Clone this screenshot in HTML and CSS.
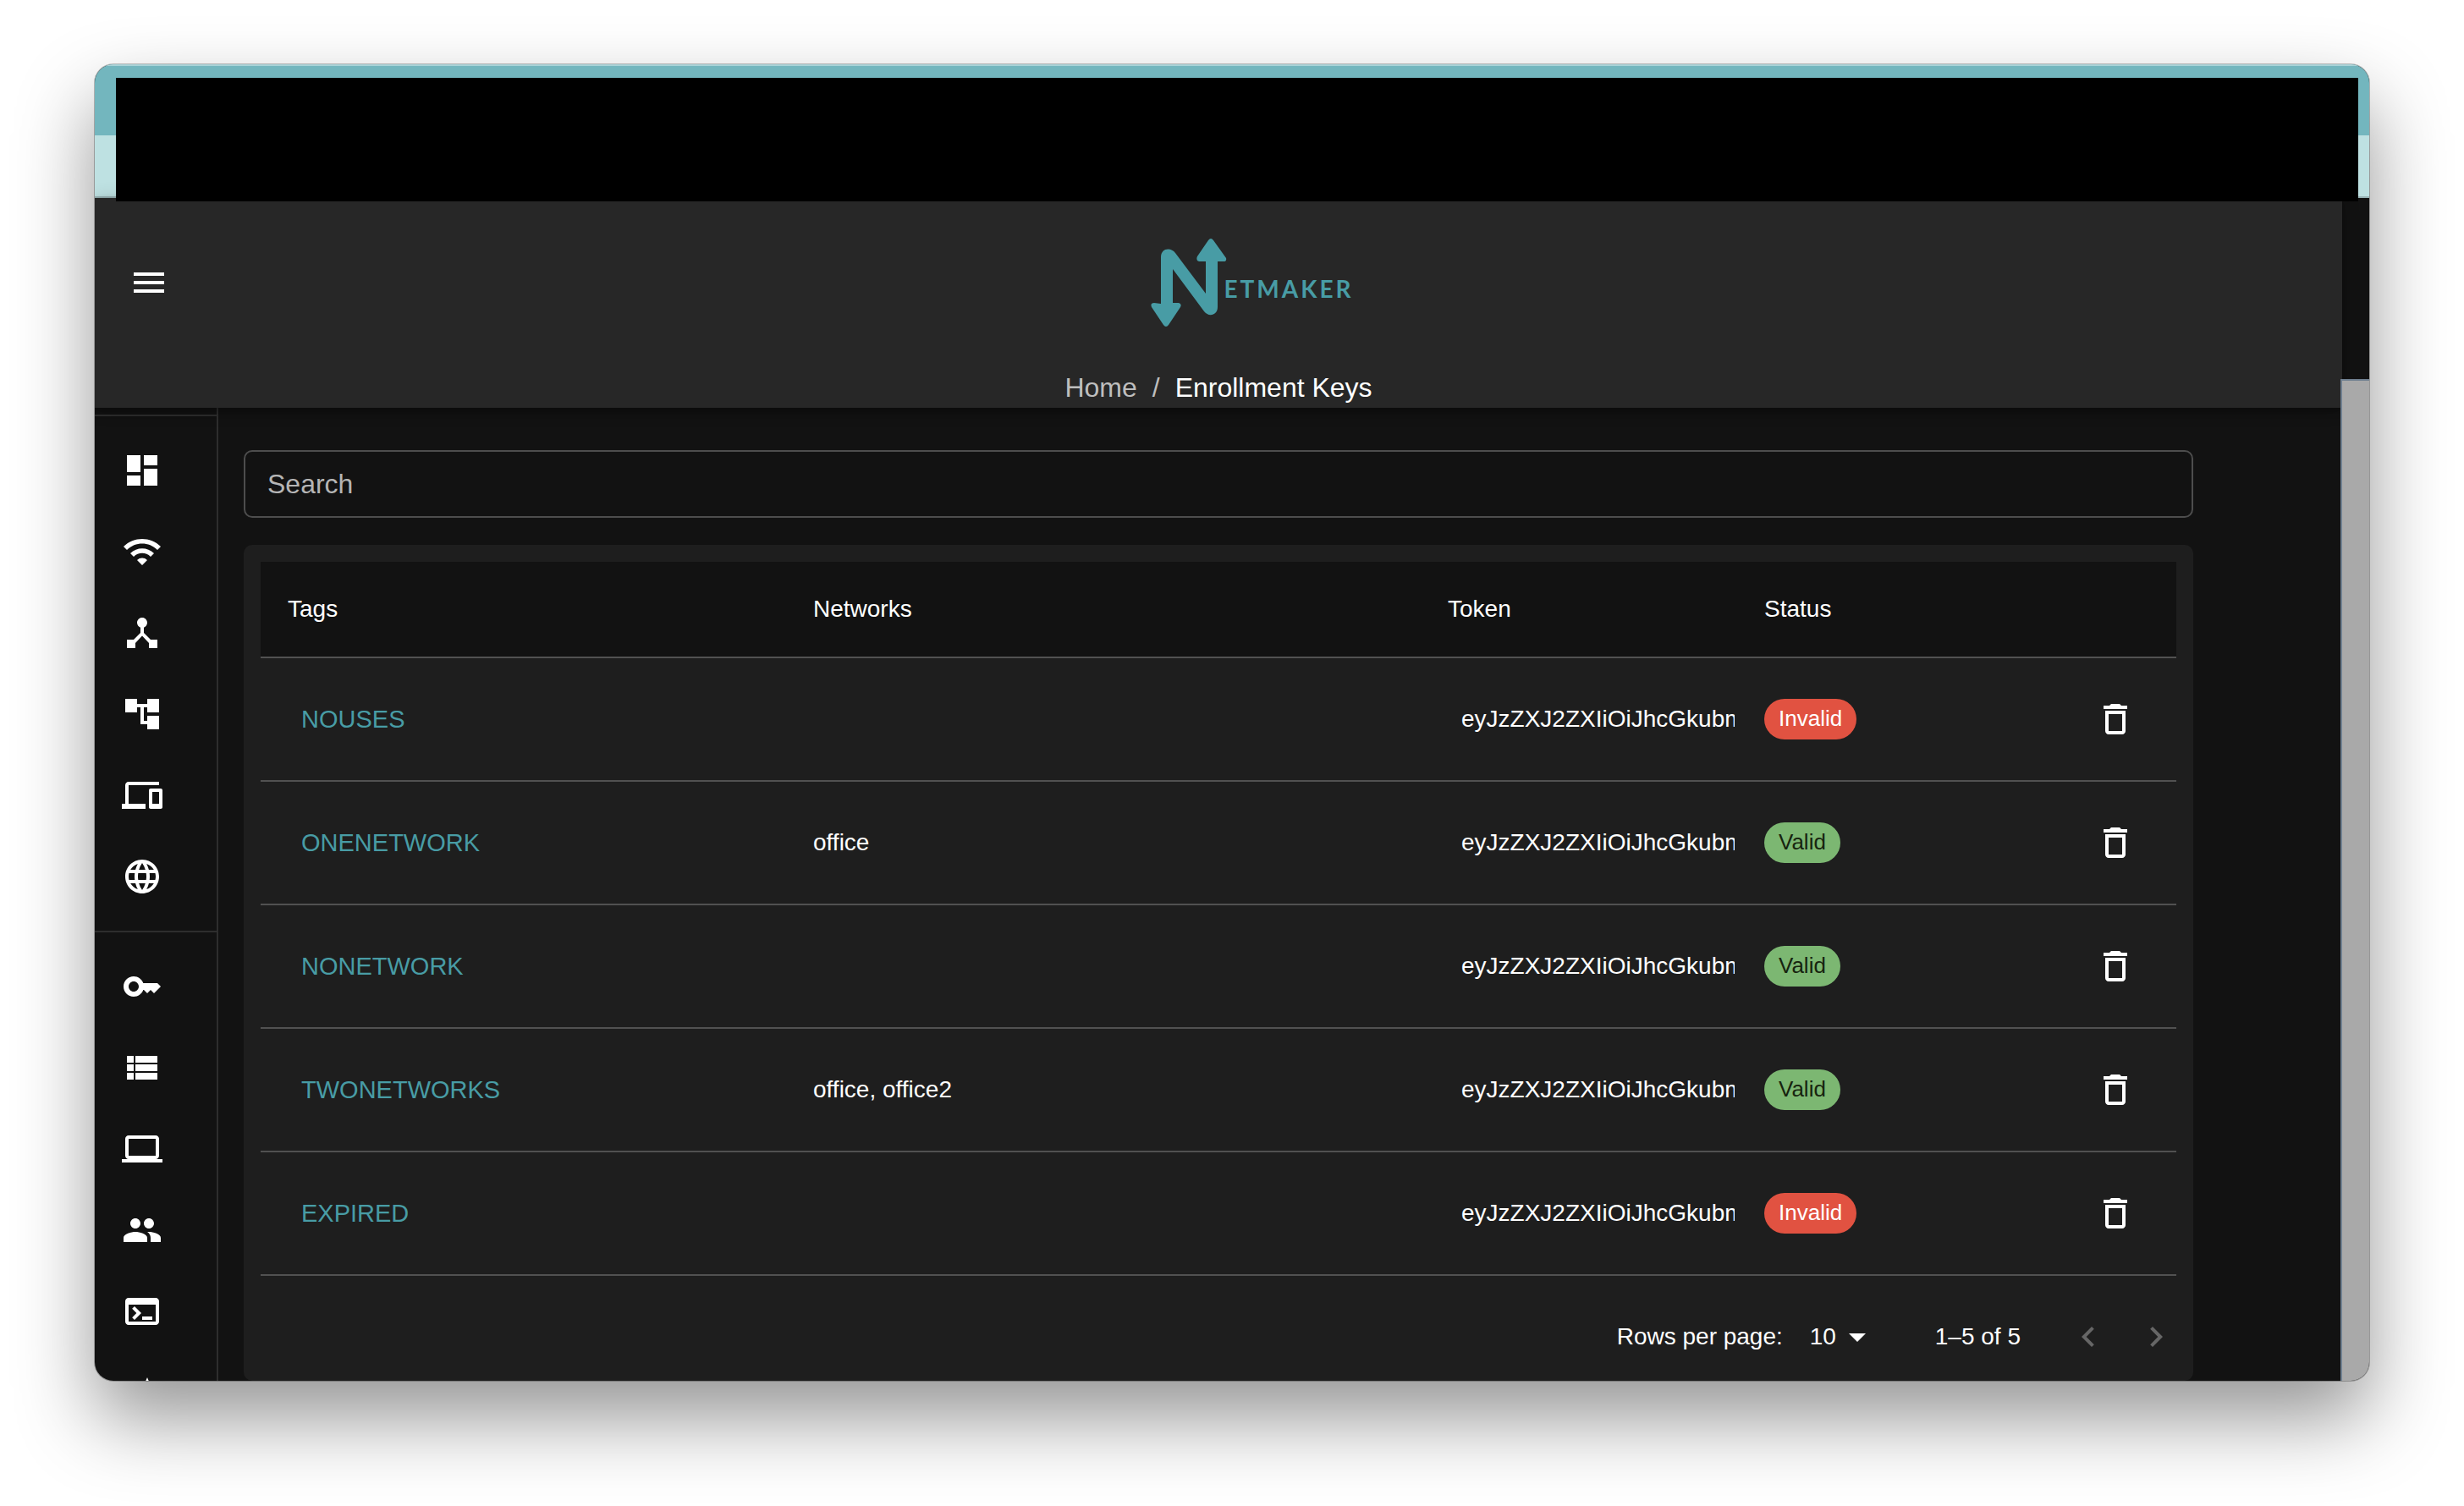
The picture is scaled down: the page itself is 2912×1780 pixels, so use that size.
FILE: index.html
```html
<!DOCTYPE html>
<html lang="en">
<head>
<meta charset="utf-8">
<title>Netmaker – Enrollment Keys</title>
<link rel="stylesheet" href="styles.css">
</head>
<body>
<svg class="defs" aria-hidden="true">
  <symbol id="trash" viewBox="0 0 24 24"><path d="M6 19c0 1.100.9 2 2 2h8c1.100 0 2-.9 2-2V7H6v12zM8 9h8v10H8V9zm7.500-5-1-1h-5l-1 1H5v2h14V4z"/></symbol>
</svg>
<div class="window">
  <div class="chrome"><div class="tabs"></div><div class="toolbar"></div></div>
  <div class="redaction"></div>
  <div class="viewport">
    <div class="app">
      <header class="appbar">
        <div class="appbar-row">
          <button class="icon-button" aria-label="Open menu"><svg class="icon" viewBox="0 0 24 24"><path d="M3 18h18v-2H3v2zm0-5h18v-2H3v2zm0-7v2h18V6H3z"/></svg></button>
          <a class="logo" href="#" aria-label="Netmaker">
            <svg class="logo-mark" viewBox="0 0 90 106"><path d="M12 78V23C12 12 24 11 29 18L65 66V28H57Q53 27 55 22L68 3Q71-1 74 3L89 24Q90 28 86 28H79V82C79 92 68 94 63 87L26 37V77H33Q37 78 35 82L21 103Q18 107 15 103L1 82Q-1 77 4 77Z"/></svg>
            <span class="logo-word">ETMAKER</span>
          </a>
        </div>
        <nav class="crumbs" aria-label="Breadcrumb"><a href="#">Home</a><span class="sep">/</span><span class="current">Enrollment Keys</span></nav>
      </header>
      <div class="body">
        <nav class="sidebar" aria-label="Main">
          <div class="group">
            <a href="#" aria-label="Dashboard"><svg class="icon" viewBox="0 0 24 24"><path d="M3 13h8V3H3v10zm0 8h8v-6H3v6zm10 0h8V11h-8v10zm0-18v6h8V3h-8z"/></svg></a>
            <a href="#" aria-label="Networks"><svg class="icon" viewBox="0 0 24 24"><path d="m1 9 2 2c4.970-4.970 13.030-4.970 18 0l2-2C16.930 2.930 7.080 2.930 1 9zm8 8 3 3 3-3c-1.650-1.660-4.340-1.660-6 0zm-4-4 2 2c2.760-2.760 7.240-2.760 10 0l2-2C15.140 9.140 8.870 9.140 5 13z"/></svg></a>
            <a href="#" aria-label="Nodes"><svg class="icon" viewBox="0 0 24 24"><path d="M17 16l-4-4V8.820C14.160 8.400 15 7.300 15 6c0-1.660-1.340-3-3-3S9 4.340 9 6c0 1.300.84 2.400 2 2.820V12l-4 4H3v5h5v-3.050l4-4.200 4 4.200V21h5v-5h-4z"/></svg></a>
            <a href="#" aria-label="Relays"><svg class="icon" viewBox="0 0 24 24"><path d="M22 11V3h-7v3H9V3H2v8h7V8h2v10h4v3h7v-8h-7v3h-2V8h2v3z"/></svg></a>
            <a href="#" aria-label="Clients"><svg class="icon" viewBox="0 0 24 24"><path d="M4 6h18V4H4c-1.100 0-2 .9-2 2v11H0v3h14v-3H4V6zm19 2h-6c-.55 0-1 .45-1 1v10c0 .55.45 1 1 1h6c.55 0 1-.45 1-1V9c0-.55-.45-1-1-1zm-1 9h-4v-7h4v7z"/></svg></a>
            <a href="#" aria-label="DNS"><svg class="icon" viewBox="0 0 24 24"><path d="M11.990 2C6.470 2 2 6.480 2 12s4.470 10 9.990 10C17.520 22 22 17.520 22 12S17.520 2 11.990 2zm6.930 6h-2.950c-.32-1.250-.78-2.450-1.380-3.560 1.840.63 3.370 1.910 4.330 3.560zM12 4.040c.83 1.200 1.480 2.530 1.910 3.960h-3.820c.43-1.430 1.080-2.760 1.910-3.960zM4.260 14C4.100 13.360 4 12.690 4 12s.1-1.360.26-2h3.380c-.08.66-.14 1.320-.14 2s.06 1.340.14 2H4.260zm.82 2h2.950c.32 1.250.78 2.450 1.380 3.560-1.840-.63-3.370-1.900-4.330-3.560zm2.950-8H5.080c.96-1.660 2.490-2.930 4.330-3.560C8.810 5.550 8.350 6.750 8.030 8zM12 19.960c-.83-1.200-1.480-2.530-1.910-3.960h3.820c-.43 1.430-1.080 2.760-1.910 3.960zM14.340 14H9.660c-.09-.66-.16-1.320-.16-2s.07-1.350.16-2h4.680c.09.65.16 1.320.16 2s-.07 1.340-.16 2zm.25 5.560c.6-1.110 1.060-2.310 1.380-3.560h2.950c-.96 1.650-2.490 2.930-4.330 3.560zM16.360 14c.08-.66.14-1.320.14-2s-.06-1.340-.14-2h3.380c.16.64.26 1.310.26 2s-.1 1.360-.26 2h-3.380z"/></svg></a>
          </div>
          <div class="group">
            <a href="#" aria-label="Enrollment keys"><svg class="icon" viewBox="0 0 24 24"><path d="M21 10h-8.350C11.830 7.670 9.610 6 7 6c-3.310 0-6 2.690-6 6s2.690 6 6 6c2.610 0 4.830-1.670 5.650-4H13l2 2 2-2 2 2 4-4.040L21 10zM7 15c-1.650 0-3-1.350-3-3s1.350-3 3-3 3 1.350 3 3-1.350 3-3 3z"/></svg></a>
            <a href="#" aria-label="ACLs"><svg class="icon" viewBox="0 0 24 24"><path d="M3 14h4v-4H3v4zm0 5h4v-4H3v4zM3 9h4V5H3v4zm5 5h13v-4H8v4zm0 5h13v-4H8v4zM8 5v4h13V5H8z"/></svg></a>
            <a href="#" aria-label="Hosts"><svg class="icon" viewBox="0 0 24 24"><path d="M20 18c1.100 0 1.990-.9 1.990-2L22 6c0-1.100-.9-2-2-2H4c-1.100 0-2 .9-2 2v10c0 1.100.9 2 2 2H0v2h24v-2h-4zM4 6h16v10H4V6z"/></svg></a>
            <a href="#" aria-label="Users"><svg class="icon" viewBox="0 0 24 24"><path d="M16 11c1.660 0 2.990-1.340 2.990-3S17.660 5 16 5c-1.660 0-3 1.340-3 3s1.340 3 3 3zm-8 0c1.660 0 2.990-1.340 2.990-3S9.660 5 8 5C6.340 5 5 6.340 5 8s1.340 3 3 3zm0 2c-2.330 0-7 1.170-7 3.500V19h14v-2.500c0-2.330-4.670-3.500-7-3.500zm8 0c-.29 0-.62.02-.97.05 1.160.84 1.970 1.970 1.970 3.450V19h6v-2.500c0-2.330-4.670-3.500-7-3.500z"/></svg></a>
            <a href="#" aria-label="Logs"><svg class="icon" viewBox="0 0 24 24"><path d="M20 4H4c-1.110 0-2 .9-2 2v12c0 1.100.89 2 2 2h16c1.100 0 2-.9 2-2V6c0-1.100-.89-2-2-2zm0 14H4V8h16v10zm-2-1h-6v-2h6v2zM7.500 17l-1.410-1.410L8.670 13l-2.590-2.590L7.500 9l4 4-4 4z"/></svg></a>
            <a href="#" aria-label="Theme"><svg class="icon" viewBox="0 0 24 24"><path d="M15 3 16.500 6.500 20 8l-3.500 1.500L15 13 13.500 9.500 10 8l3.500-1.500z"/></svg></a>
          </div>
        </nav>
        <main class="main">
          <input class="search" type="text" placeholder="Search" aria-label="Search">
          <section class="card">
            <table class="keys">
              <colgroup><col class="c-tags"><col class="c-networks"><col class="c-token"><col class="c-status"><col></colgroup>
              <thead><tr><th>Tags</th><th>Networks</th><th>Token</th><th>Status</th><th></th></tr></thead>
              <tbody>
                <tr><td><button class="tag">NOUSES</button></td><td></td><td class="token"><div>eyJzZXJ2ZXIiOiJhcGkubmV0</div></td><td><span class="pill invalid">Invalid</span></td><td class="action"><button class="icon-button" aria-label="Delete NOUSES"><svg class="icon"><use href="#trash"/></svg></button></td></tr>
                <tr><td><button class="tag">ONENETWORK</button></td><td>office</td><td class="token"><div>eyJzZXJ2ZXIiOiJhcGkubmV0</div></td><td><span class="pill valid">Valid</span></td><td class="action"><button class="icon-button" aria-label="Delete ONENETWORK"><svg class="icon"><use href="#trash"/></svg></button></td></tr>
                <tr><td><button class="tag">NONETWORK</button></td><td></td><td class="token"><div>eyJzZXJ2ZXIiOiJhcGkubmV0</div></td><td><span class="pill valid">Valid</span></td><td class="action"><button class="icon-button" aria-label="Delete NONETWORK"><svg class="icon"><use href="#trash"/></svg></button></td></tr>
                <tr><td><button class="tag">TWONETWORKS</button></td><td>office, office2</td><td class="token"><div>eyJzZXJ2ZXIiOiJhcGkubmV0</div></td><td><span class="pill valid">Valid</span></td><td class="action"><button class="icon-button" aria-label="Delete TWONETWORKS"><svg class="icon"><use href="#trash"/></svg></button></td></tr>
                <tr><td><button class="tag">EXPIRED</button></td><td></td><td class="token"><div>eyJzZXJ2ZXIiOiJhcGkubmV0</div></td><td><span class="pill invalid">Invalid</span></td><td class="action"><button class="icon-button" aria-label="Delete EXPIRED"><svg class="icon"><use href="#trash"/></svg></button></td></tr>
              </tbody>
            </table>
            <footer class="pagination">
              <label for="rows">Rows per page:</label>
              <span class="select"><select id="rows"><option>10</option><option>25</option></select><svg class="icon" viewBox="0 0 24 24"><path d="m7 10 5 5 5-5z"/></svg></span>
              <span class="range">1–5 of 5</span>
              <button class="page" aria-label="Previous page" disabled><svg class="icon" viewBox="0 0 24 24"><path d="M15.410 16.590 10.830 12l4.580-4.590L14 6l-6 6 6 6z"/></svg></button>
              <button class="page" aria-label="Next page" disabled><svg class="icon" viewBox="0 0 24 24"><path d="M8.590 16.590 13.170 12 8.590 7.410 10 6l6 6-6 6z"/></svg></button>
            </footer>
          </section>
        </main>
      </div>
    </div>
    <div class="scrollbar"><div class="thumb"></div></div>
  </div>
</div>
</body>
</html>
```
FILE: styles.css
```css
* { box-sizing: border-box; }
body {
  margin: 0;
  padding: 76px 112px 148px;
  height: 100vh;
  background: #fff;
  color: #fff;
  font: 28px/40px "Liberation Sans", Arial, sans-serif;
  overflow: hidden;
}
button, input, select { font: inherit; color: inherit; background: none; border: 0; margin: 0; padding: 0; }
a { color: inherit; text-decoration: none; }
.defs { position: absolute; width: 0; height: 0; }
.icon { display: block; width: 48px; height: 48px; fill: currentColor; }

.window {
  position: relative;
  display: flex;
  flex-direction: column;
  height: 100%;
  border-radius: 22px;
  overflow: hidden;
  background: #121212;
  box-shadow: 0 0 0 1px rgba(0, 0, 0, .25), 0 44px 92px rgba(0, 0, 0, .42);
}
.chrome { flex: none; border-bottom: 2px solid #9ab5b7; }
.tabs { height: 84px; background: #73b6be; border-top: 2px solid #a9d3d8; }
.toolbar { height: 72px; background: #bee1e2; }
.redaction { position: absolute; z-index: 3; top: 16px; left: 25px; right: 13px; height: 146px; background: #000; }
.viewport { flex: 1; min-height: 0; display: flex; }
.app { flex: 1; min-width: 0; display: flex; flex-direction: column; }
.scrollbar { width: 32px; padding-top: 214px; display: flex; }
.thumb { flex: 1; z-index: 2; margin-left: -2px; background: #a9a9a9; border: solid #708090; border-width: 2px 0 0 2px; }

.appbar { flex: none; z-index: 1; background: #272727; box-shadow: 0 4px 8px rgba(0, 0, 0, .3), 0 2px 20px rgba(0, 0, 0, .2); }
.appbar-row { height: 200px; display: grid; grid-template-columns: 1fr auto 1fr; align-items: center; padding: 0 40px; }
.icon-button { width: 48px; height: 48px; }
.logo { display: flex; align-items: center; padding-left: 80px; color: #489ca5; }
.logo-mark { width: 90px; height: 106px; margin-right: -4px; fill: currentColor; }
.logo-word { font: 700 28px/40px Lato, sans-serif; letter-spacing: 3px; padding-top: 14px; }
.crumbs { display: flex; justify-content: center; gap: 18px; font-size: 32px; line-height: 48px; color: #bebebe; }
.crumbs .current { color: #fff; }

.body { flex: 1; min-height: 0; display: flex; }
.sidebar { flex: none; width: 146px; border-right: 2px solid #2e2e2e; padding-top: 8px; overflow: hidden; }
.group { border-top: 2px solid #2e2e2e; padding: 16px 0; }
.group a { display: flex; align-items: center; height: 96px; padding-left: 32px; }
.main { flex: 1; min-width: 0; overflow: hidden; padding: 50px 176px 0 30px; }
.search { display: block; width: 100%; height: 80px; padding: 0 26px; border: 2px solid #4d4d4d; border-radius: 10px; font-size: 32px; }
.search::placeholder { color: #b5b5b5; opacity: 1; }
.card { margin-top: 32px; padding: 20px 20px 0; background: #1e1e1e; border-radius: 10px; }

.keys { width: 100%; table-layout: fixed; border-collapse: separate; border-spacing: 0; }
.c-tags { width: 621px; }
.c-networks { width: 750px; }
.c-token { width: 374px; }
.c-status { width: 312px; }
.keys th, .keys td { padding: 0 0 0 32px; text-align: left; font-weight: 400; border-bottom: 2px solid #515151; }
.keys th { height: 114px; background: #121212; }
.keys td { height: 146px; }
.tag { padding: 0 16px; font-size: 29px; color: #489ca5; }
.keys .token { padding-right: 3px; }
.token div { padding-left: 16px; overflow: hidden; white-space: nowrap; }
.pill { display: inline-block; vertical-align: middle; height: 48px; padding: 0 17px; border-radius: 24px; font-size: 26px; line-height: 46px; }
.invalid { background: #e15241; }
.valid { background: #7cb772; color: #17240f; }
.keys .action { padding: 0 48px 0 0; }
.action .icon-button { display: block; margin-left: auto; }

.pagination { display: flex; align-items: center; justify-content: flex-end; height: 104px; margin: 20px -16px 0 0; }
.select { position: relative; margin: 0 68px 0 16px; }
.select select { appearance: none; width: 96px; height: 48px; padding-left: 16px; }
.select .icon { position: absolute; top: 0; right: 0; pointer-events: none; }
.range { margin-right: 40px; }
.page { width: 80px; display: flex; justify-content: center; color: #666; }
```
